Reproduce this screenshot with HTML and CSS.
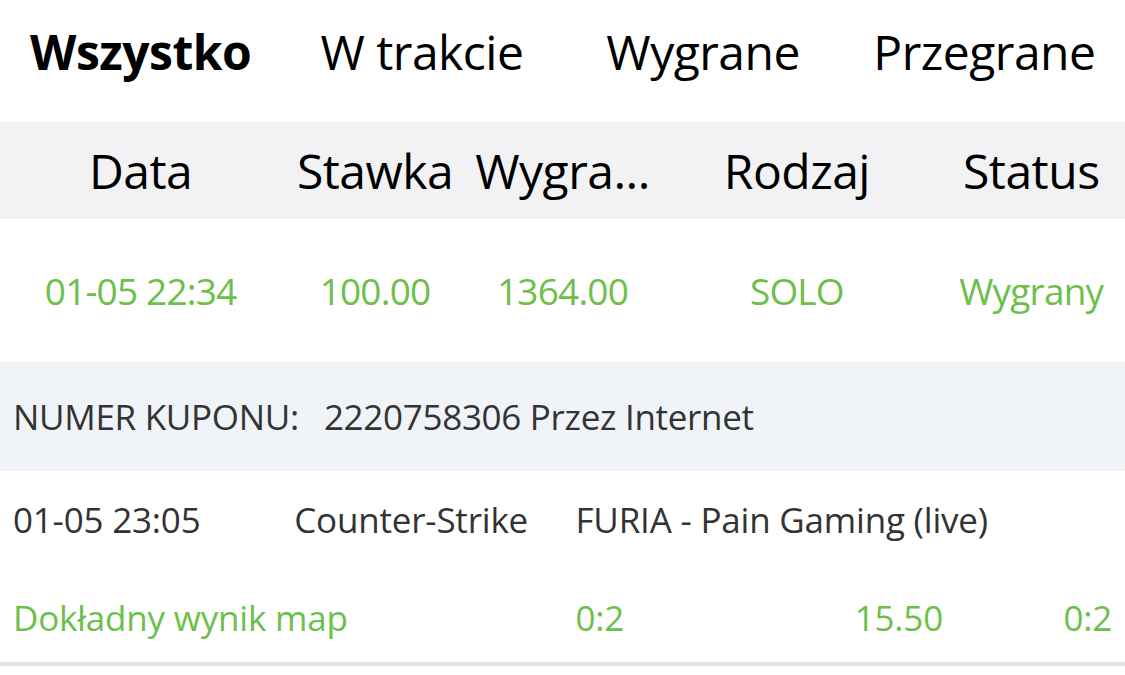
FILE: index.html
```html
<!DOCTYPE html>
<html lang="pl">
<head>
<meta charset="utf-8">
<title>Kupony</title>
<link rel="stylesheet" href="styles.css">
</head>
<body>
<div class="page">
  <nav class="tabs">
    <div class="tab active">Wszystko</div>
    <div class="tab">W trakcie</div>
    <div class="tab">Wygrane</div>
    <div class="tab">Przegrane</div>
  </nav>
  <div class="thead">
    <div class="cell">Data</div>
    <div class="cell">Stawka</div>
    <div class="cell">Wygra...</div>
    <div class="cell">Rodzaj</div>
    <div class="cell">Status</div>
  </div>
  <div class="trow">
    <div class="cell">01-05 22:34</div>
    <div class="cell">100.00</div>
    <div class="cell">1364.00</div>
    <div class="cell">SOLO</div>
    <div class="cell">Wygrany</div>
  </div>
  <div class="coupon">
    <span class="coupon-label">NUMER KUPONU:</span>
    <span class="coupon-num">2220758306 Przez Internet</span>
  </div>
  <div class="match">
    <div class="mline">
      <div class="mcell">01-05 23:05</div>
      <div class="mcell">Counter-Strike</div>
      <div class="mcell wide">FURIA - Pain Gaming (live)</div>
    </div>
    <div class="mline green">
      <div class="mcell">Dokładny wynik map</div>
      <div class="mcell"></div>
      <div class="mcell">0:2</div>
      <div class="mcell split"><span>15.50</span><span>0:2</span></div>
    </div>
  </div>
</div>
</body>
</html>
```
FILE: styles.css
```css
html, body {
  margin: 0;
  padding: 0;
  background: #ffffff;
}
body {
  font-family: "Open Sans", "Noto Sans", sans-serif;
  color: #000;
}
.page {
  width: 1125px;
  height: 675px;
  overflow: hidden;
}
.tabs {
  display: grid;
  grid-template-columns: repeat(4, minmax(0, 1fr));
  height: 122px;
  align-items: center;
}
.tab {
  text-align: center;
  font-size: 48px;
  color: #000;
  letter-spacing: -0.5px;
  padding-bottom: 20px;
  white-space: nowrap;
}
.tab.active {
  font-weight: 700;
}
.thead, .trow {
  display: grid;
  grid-template-columns: 1.5fr 1fr 1fr 1.5fr 1fr;
  align-items: center;
}
.thead {
  background: #f2f2f4;
  height: 97px;
  font-size: 48px;
  letter-spacing: -0.5px;
  color: #000;
}
.cell {
  text-align: center;
  white-space: nowrap;
}
.trow {
  height: 143px;
  font-size: 37px;
  color: #6cc04a;
  letter-spacing: -0.8px;
}
.coupon {
  background: #f0f3f8;
  height: 109px;
  display: flex;
  align-items: center;
  padding-left: 13px;
  font-size: 35px;
  color: #333;
  letter-spacing: -0.3px;
  gap: 25px;
}
.match {
  height: 191px;
  border-bottom: 4px solid #e3e3e3;
  display: flex;
  flex-direction: column;
}
.mline {
  display: grid;
  grid-template-columns: repeat(4, minmax(0, 1fr));
  flex: 1;
  align-items: center;
  font-size: 35px;
  color: #333;
  letter-spacing: -0.2px;
}
.mline:first-child {
  padding-top: 4px;
}
.mline.green {
  color: #6cc04a;
  padding-top: 10px;
}
.mcell {
  padding-left: 13px;
  white-space: nowrap;
}
.mcell.wide {
  grid-column: span 2;
}
.mcell.split {
  display: flex;
  justify-content: space-between;
  padding-left: 11px;
  padding-right: 13px;
}
```
